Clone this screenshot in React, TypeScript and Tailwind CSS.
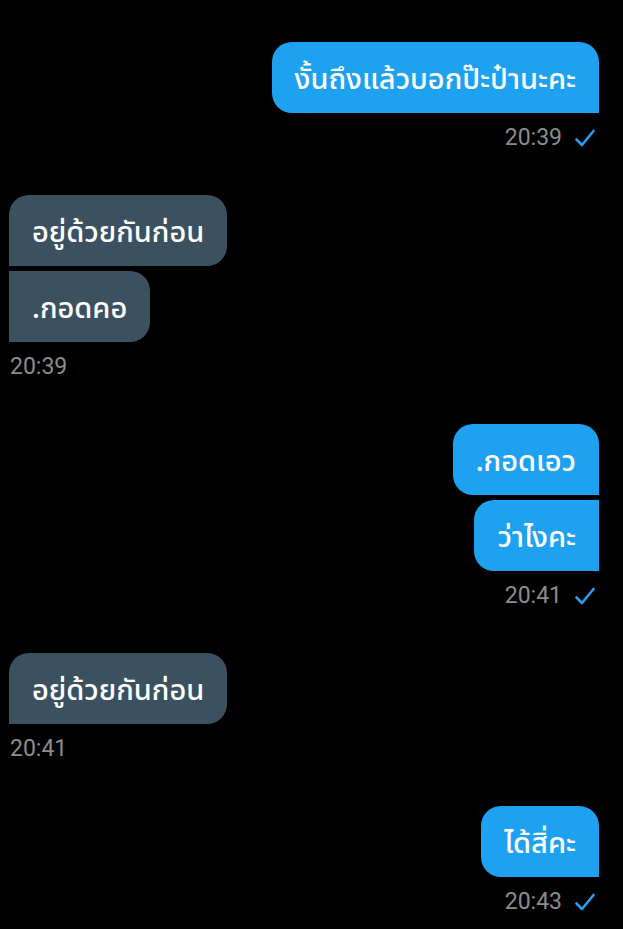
import React from "react";

type Group = { side: "in" | "out"; time: string; messages: string[] };

const groups: Group[] = [
  { side: "out", time: "20:39", messages: ["งั้นถึงแล้วบอกป๊ะป๋านะคะ"] },
  { side: "in", time: "20:39", messages: ["อยู่ด้วยกันก่อน", ".กอดคอ"] },
  { side: "out", time: "20:41", messages: [".กอดเอว", "ว่าไงคะ"] },
  { side: "in", time: "20:41", messages: ["อยู่ด้วยกันก่อน"] },
  { side: "out", time: "20:43", messages: ["ได้สิ่คะ"] },
];

function Check() {
  return (
    <svg width="22" height="20" viewBox="0 0 22 20" fill="none" className="ml-3">
      <path d="M2.5 11.5 L8 17 L19.5 3" stroke="#2a9cf0" strokeWidth="2.6" strokeLinecap="round" strokeLinejoin="round" />
    </svg>
  );
}

function Bubble({ text, side, first }: { text: string; side: "in" | "out"; first: boolean }) {
  const shape =
    side === "out"
      ? first
        ? "rounded-[20px] rounded-br-none bg-[#1fa1f1]"
        : "rounded-l-[20px] rounded-r-none bg-[#1fa1f1]"
      : first
        ? "rounded-[20px] rounded-bl-none bg-[#3b5160]"
        : "rounded-r-[20px] rounded-l-none bg-[#3b5160]";
  return (
    <div className={`${shape} h-[71px] flex items-center px-[23px] text-[29px] font-medium leading-[39px] text-white whitespace-nowrap`}>
      {text}
    </div>
  );
}

export default function App() {
  return (
    <div
      className="min-h-[929px] w-[623px] bg-black pt-[42px] pl-[9px] pr-[24px] flex flex-col gap-[39px]"
      style={{ fontFamily: '"Noto Sans", "Noto Sans Thai", "Liberation Sans", sans-serif' }}
    >
      {groups.map((g, gi) => (
        <div key={gi} className={`flex flex-col ${g.side === "out" ? "items-end" : "items-start"}`}>
          <div className={`flex flex-col gap-[5px] ${g.side === "out" ? "items-end" : "items-start"}`}>
            {g.messages.map((m, i) => (
              <Bubble key={i} text={m} side={g.side} first={i === 0} />
            ))}
          </div>
          <div
            className={`mt-[7px] h-[36px] flex items-center text-[23px] text-[#8c8c8c] ${g.side === "out" ? "pr-[3px]" : "pl-[1px]"}`}
            style={{ fontFamily: 'Roboto, "Liberation Sans", sans-serif' }}
          >
            {g.time}
            {g.side === "out" && <Check />}
          </div>
        </div>
      ))}
    </div>
  );
}
